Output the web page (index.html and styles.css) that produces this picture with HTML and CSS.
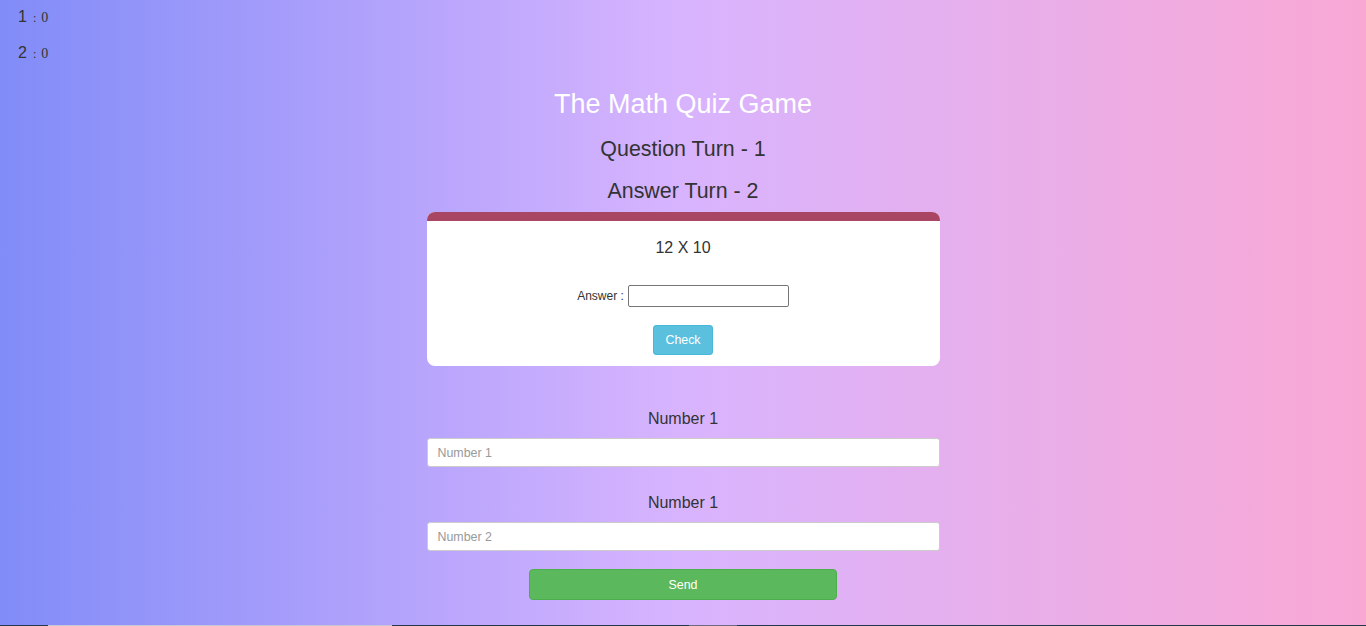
FILE: index.html
```html
<!DOCTYPE html>
<html lang="en">
<head>
<meta charset="utf-8">
<title>The Math Quiz Game</title>
<link rel="stylesheet" href="styles.css">
</head>
<body>
<div class="scores">
  <div class="score"><span class="player">1</span><span class="sep">:</span><span class="pts">0</span></div>
  <div class="score"><span class="player">2</span><span class="sep">:</span><span class="pts">0</span></div>
</div>
<main class="game">
  <h1 class="title">The Math Quiz Game</h1>
  <h3 class="turn turn-q">Question Turn - 1</h3>
  <h3 class="turn turn-a">Answer Turn - 2</h3>
  <section class="card">
    <div class="card-bar"></div>
    <div class="question">12 X 10</div>
    <div class="answer-row">
      <label class="answer-label" for="answer">Answer :</label>
      <input id="answer" class="answer-input" type="text">
    </div>
    <button class="btn btn-check" type="button">Check</button>
  </section>
  <div class="field">
    <label class="field-label" for="n1">Number 1</label>
    <input id="n1" class="field-input" type="text" placeholder="Number 1">
  </div>
  <div class="field field-second">
    <label class="field-label" for="n2">Number 1</label>
    <input id="n2" class="field-input" type="text" placeholder="Number 2">
  </div>
  <button class="btn btn-send" type="button">Send</button>
</main>
<div class="taskbar">
  <span class="tb-a"></span><span class="tb-b"></span><span class="tb-c"></span><span class="tb-d"></span><span class="tb-e"></span>
</div>
</body>
</html>
```
FILE: styles.css
```css
html, body {
  margin: 0;
  padding: 0;
}
body {
  min-height: 626px;
  background: linear-gradient(to right, #818cf8, #d8b4fe, #f9a8d4);
  font-family: "Liberation Sans", Arial, sans-serif;
  color: #333;
  font-size: 14px;
  overflow: hidden;
}
.scores {
  padding: 0 0 0 18px;
  margin-top: -1px;
}
.score {
  height: 36px;
  line-height: 36px;
}
.player {
  font-size: 16px;
}
.sep {
  font-family: "Liberation Serif", "Times New Roman", serif;
  font-size: 12px;
  margin: 0 5px 0 6px;
}
.pts {
  font-family: "Liberation Serif", "Times New Roman", serif;
  font-size: 14px;
}
.game {
  width: 513px;
  margin: 0 auto;
  display: flex;
  flex-direction: column;
  align-items: center;
  text-align: center;
}
.title {
  margin: 13px 0 0;
  font-size: 27px;
  line-height: 40px;
  font-weight: normal;
  color: #fff;
}
.turn {
  margin: 10px 0 0;
  font-size: 21.4px;
  line-height: 30px;
  font-weight: normal;
  color: #333;
}
.turn-a {
  margin-top: 12px;
}
.card {
  margin-top: 6px;
  width: 100%;
  background: #fff;
  border-radius: 8px;
  overflow: hidden;
  padding-bottom: 11px;
  display: flex;
  flex-direction: column;
  align-items: center;
}
.card-bar {
  align-self: stretch;
  height: 9px;
  background: #a94663;
}
.question {
  margin-top: 16px;
  font-size: 16px;
  line-height: 22px;
}
.answer-row {
  margin-top: 26px;
  display: flex;
  align-items: center;
  gap: 4px;
  height: 22px;
}
.answer-label {
  font-size: 12px;
}
.answer-input {
  box-sizing: border-box;
  width: 161px;
  height: 22px;
  border: 1px solid #767676;
  border-radius: 2px;
  padding: 1px 2px;
  font-family: "Liberation Sans", Arial, sans-serif;
  font-size: 13px;
}
.btn {
  box-sizing: border-box;
  font-family: "Liberation Sans", Arial, sans-serif;
  font-size: 12.4px;
  color: #fff;
  cursor: pointer;
}
.btn-check {
  margin-top: 18px;
  width: 60px;
  height: 30px;
  background: #5bc0de;
  border: 1px solid #46b8da;
  border-radius: 3px;
  padding: 0;
  line-height: 26px;
}
.field {
  margin-top: 42px;
  width: 100%;
  display: flex;
  flex-direction: column;
  align-items: center;
}
.field-second {
  margin-top: 25px;
}
.field-label {
  font-size: 16px;
  line-height: 22px;
}
.field-input {
  box-sizing: border-box;
  margin-top: 8px;
  width: 100%;
  height: 29px;
  border: 1px solid #ccc;
  border-radius: 3px;
  padding: 0 10px;
  background: #fff;
  font-family: "Liberation Sans", Arial, sans-serif;
  font-size: 12.4px;
  color: #555;
}
.field-input::placeholder {
  color: #999;
}
.btn-send {
  margin-top: 18px;
  width: 308px;
  height: 31px;
  background: #5cb85c;
  border: 1px solid #4cae4c;
  border-radius: 4px;
  padding: 0;
}
.taskbar {
  position: fixed;
  left: 0;
  right: 0;
  bottom: 0;
  height: 1px;
  display: flex;
}
.taskbar span {
  display: block;
  height: 1px;
}
.tb-a { width: 48px; background: #22384a; }
.tb-b { width: 344px; background: #c8c6d2; }
.tb-c { width: 297px; background: #22384a; }
.tb-d { width: 48px; background: #6c6a80; }
.tb-e { flex: 1; background: #22384a; }
```
